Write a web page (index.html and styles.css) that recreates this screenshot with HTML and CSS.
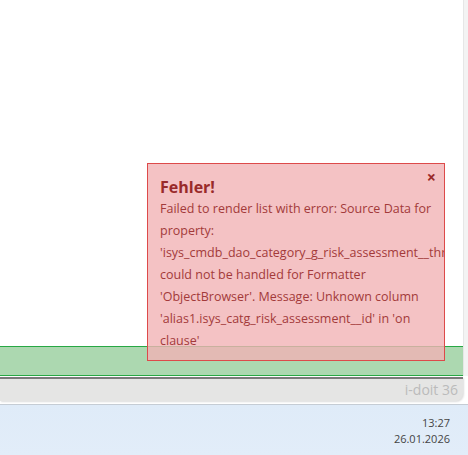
FILE: index.html
```html
<!DOCTYPE html>
<html lang="de">
<head>
  <meta charset="UTF-8">
  <title>i-doit</title>
  <link rel="stylesheet" href="styles.css">
</head>
<body>

  <div class="window">
    <div class="main">
      <div class="content">
        <div class="page"></div>
        <div class="statusbar"></div>
      </div>
      <div class="side"></div>
    </div>
    <div class="footer">i-doit 36</div>
  </div>

  <div class="taskbar">
    <div class="clock">
      <div>13:27</div>
      <div>26.01.2026</div>
    </div>
  </div>

  <div class="alert" id="alert">
    <span class="close" onclick="document.getElementById('alert').style.display='none'">&times;</span>
    <h4>Fehler!</h4>
    <p>Failed to render list with error: Source Data for property: 'isys_cmdb_dao_category_g_risk_assessment__threat' could not be handled for Formatter 'ObjectBrowser'. Message: Unknown column 'alias1.isys_catg_risk_assessment__id' in 'on clause'</p>
  </div>

</body>
</html>
```

FILE: styles.css
```css
body {
  margin: 0;
  font-family: "Open Sans", Arial, sans-serif;
  background: #fff;
  width: 468px;
  height: 455px;
  overflow: hidden;
}
.window {
  height: 404px;
  display: flex;
  flex-direction: column;
}
.main {
  display: flex;
}
.content {
  width: 463px;
}
.page {
  height: 346px;
  background: #fff;
}
.statusbar {
  height: 28px;
  background: #acd8b0;
  border-top: 1px solid #27a844;
  border-bottom: 1px solid #27a844;
}
.side {
  flex: 1;
  background: #f3f3f3;
  border-left: 1px solid #e6e6e6;
}
.footer {
  width: 463px;
  height: 24px;
  box-sizing: border-box;
  margin-top: 1px;
  border-top: 2px solid #7a7a7a;
  background: #e5e5e4;
  border-bottom-right-radius: 8px;
  box-shadow: 1px 1px 2px #ddd;
  color: #bbb;
  font-size: 14px;
  line-height: 22px;
  text-align: right;
  padding-right: 5px;
}
.taskbar {
  height: 50px;
  border-top: 1px solid #c5ccd4;
  background: linear-gradient(#dfebf8, #e2edf9);
  display: flex;
  justify-content: flex-end;
}
.clock {
  padding: 10px 18px 0 0;
  font-size: 11px;
  line-height: 16px;
  color: #444;
  text-align: right;
}
.alert {
  position: absolute;
  left: 147px;
  top: 163px;
  width: 298px;
  height: 198px;
  box-sizing: border-box;
  padding: 12px 12px 0 12px;
  background: rgba(241, 179, 181, 0.8);
  border: 1px solid #dd4a4a;
  color: #a33a3a;
  overflow: hidden;
}
.alert h4 {
  margin: 0;
  font-size: 16px;
  line-height: 22px;
  font-weight: bold;
  color: #992a2a;
}
.alert p {
  margin: 0;
  font-size: 12.5px;
  line-height: 22px;
}
.close {
  position: absolute;
  right: 8px;
  top: 2px;
  font-size: 16px;
  font-weight: bold;
  color: #992a2a;
  cursor: pointer;
}
```
